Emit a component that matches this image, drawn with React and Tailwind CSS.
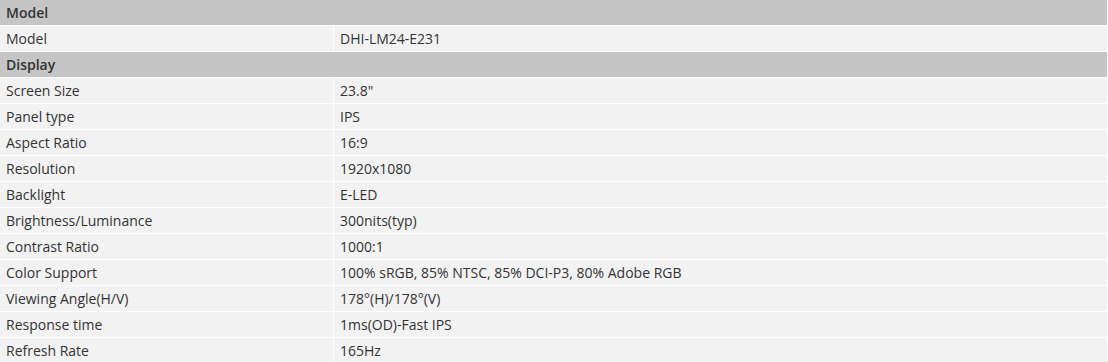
import React from 'react';

const sections = [
  { title: 'Model', rows: [['Model', 'DHI-LM24-E231']] },
  {
    title: 'Display',
    rows: [
      ['Screen Size', '23.8"'],
      ['Panel type', 'IPS'],
      ['Aspect Ratio', '16:9'],
      ['Resolution', '1920x1080'],
      ['Backlight', 'E-LED'],
      ['Brightness/Luminance', '300nits(typ)'],
      ['Contrast Ratio', '1000:1'],
      ['Color Support', '100% sRGB, 85% NTSC, 85% DCI-P3, 80% Adobe RGB'],
      ['Viewing Angle(H/V)', '178°(H)/178°(V)'],
      ['Response time', '1ms(OD)-Fast IPS'],
      ['Refresh Rate', '165Hz'],
    ],
  },
];

const SpecRow = ({ label, value }) => (
  <div className="flex gap-px h-[25px]">
    <div className="w-[333px] shrink-0 bg-[#f2f2f2] px-[6px] flex items-center">{label}</div>
    <div className="flex-1 bg-[#f2f2f2] px-[6px] flex items-center">{value}</div>
  </div>
);

export default function App() {
  return (
    <div
      className="w-[1108px] bg-white pr-px flex flex-col gap-px text-[14px] text-[#333] leading-none"
      style={{ fontFamily: '"Open Sans", "Liberation Sans", sans-serif' }}
    >
      {sections.map((section) => (
        <React.Fragment key={section.title}>
          <div className="h-[25px] bg-[#c4c5c4] px-[6px] flex items-center font-semibold">
            {section.title}
          </div>
          {section.rows.map(([label, value]) => (
            <SpecRow key={label} label={label} value={value} />
          ))}
        </React.Fragment>
      ))}
    </div>
  );
}
